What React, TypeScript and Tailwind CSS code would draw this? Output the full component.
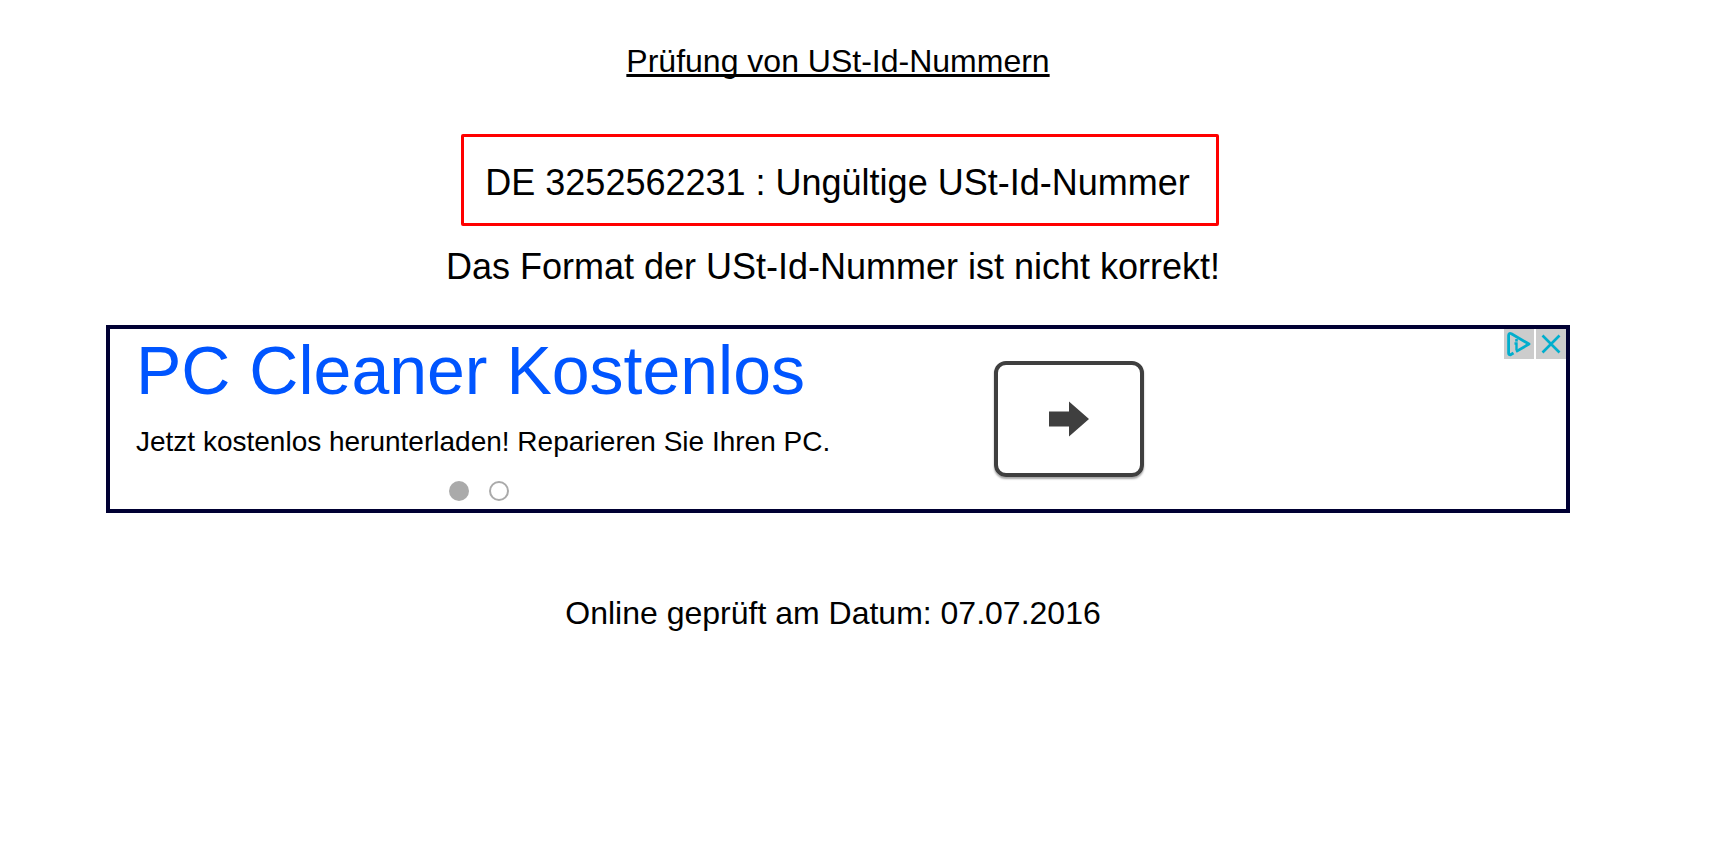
interface AdProps {
  title: string;
  text: string;
  slides: number;
  activeSlide: number;
}

function AdChoices() {
  return (
    <div className="absolute top-0 right-0 flex gap-[2px]">
      <button type="button" aria-label="AdChoices" className="h-[30px] w-[30px] bg-[#cccccc]">
        <svg viewBox="0 0 30 30" className="h-full w-full" fill="none" stroke="#00aecd">
          <path
            d="M9.5 24 L6.5 25.8 Q4.6 26 4.6 24 V6.5 Q4.6 3.6 7.4 4.8 L25 15 L12 22.6"
            strokeWidth="2.8"
            strokeLinejoin="round"
          />
          <path d="M10.5 14.5 H12.5 V21" strokeWidth="2.4" />
          <rect x="11.2" y="10" width="2.6" height="2.6" fill="#00aecd" stroke="none" />
        </svg>
      </button>
      <button type="button" aria-label="Anzeige schließen" className="h-[30px] w-[30px] bg-[#cccccc]">
        <svg viewBox="0 0 30 30" className="h-full w-full" fill="none" stroke="#00aecd" strokeWidth="2.6">
          <path d="M6.5 6.5 L23.5 23.5 M23.5 6.5 L6.5 23.5" />
        </svg>
      </button>
    </div>
  );
}

function AdBanner({ title, text, slides, activeSlide }: AdProps) {
  return (
    <aside className="relative mt-[38px] flex w-full border-4 border-[#000033] bg-white">
      <div className="flex w-[738px] shrink-0 flex-col pb-2 pl-[26px]">
        <a href="#" className="text-[68px] leading-[82px] whitespace-nowrap text-[#0055ff]">
          {title}
        </a>
        <p className="mt-[15px] text-[28px] leading-8 whitespace-nowrap">{text}</p>
        <div className="mt-[23px] mr-[26px] flex justify-center gap-5">
          {Array.from({ length: slides }, (_, i) => (
            <button
              key={i}
              type="button"
              aria-label={`Anzeige ${i + 1}`}
              className={
                i === activeSlide
                  ? "h-5 w-5 rounded-full bg-[#aaaaaa]"
                  : "h-5 w-5 rounded-full border-2 border-[#aaaaaa]"
              }
            />
          ))}
        </div>
      </div>

      <div className="flex w-[442px] items-center justify-center">
        <button
          type="button"
          aria-label="Weiter"
          className="flex h-[116px] w-[150px] items-center justify-center rounded-xl border-4 border-[#3f3f3f] shadow-[0_2px_2px_rgba(0,0,0,0.35)]"
        >
          <svg viewBox="0 0 40 36" className="h-9 w-10" fill="#3f3f3f">
            <path d="M0 10.5 H20 V0.5 L40 18 L20 35.5 V25.5 H0 Z" />
          </svg>
        </button>
      </div>

      <AdChoices />
    </aside>
  );
}

export default function App() {
  return (
    <main className="flex min-h-screen flex-col items-center bg-white pt-[41px] pr-[146px] pl-[106px] font-['Liberation_Sans',Arial,sans-serif] text-black">
      <h1 className="text-[32px] leading-10 underline decoration-[3px] underline-offset-2 [text-decoration-skip-ink:none]">
        Prüfung von USt-Id-Nummern
      </h1>

      <p className="mt-[53px] ml-1 rounded-xs border-[3px] border-[#ff0000] pt-[26px] pr-[26px] pb-5 pl-[21px] text-[36px] leading-10">
        DE 3252562231 : Ungültige USt-Id-Nummer
      </p>

      <p className="mt-[21px] pr-[10px] text-[36px] leading-10">Das Format der USt-Id-Nummer ist nicht korrekt!</p>

      <AdBanner
        title="PC Cleaner Kostenlos"
        text="Jetzt kostenlos herunterladen! Reparieren Sie Ihren PC."
        slides={2}
        activeSlide={0}
      />

      <p className="mt-20 pr-[10px] text-[32px] leading-10">Online geprüft am Datum: 07.07.2016</p>
    </main>
  );
}
